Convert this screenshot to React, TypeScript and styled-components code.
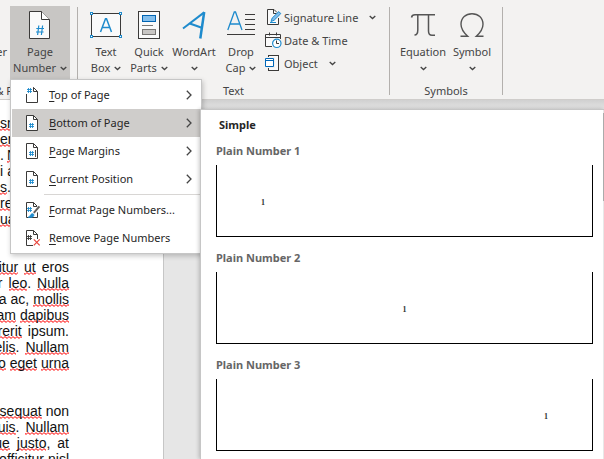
import React from "react";
import styled, { createGlobalStyle } from "styled-components";

const INK = "#3b3a39";
const BLUE = "#1e8bcd";

const Global = createGlobalStyle`
  * { box-sizing: border-box; }
  body {
    margin: 0;
    overflow: hidden;
    background: #e6e6e6;
    font: 11px/16px "Noto Sans", sans-serif;
  }
  button { margin: 0; padding: 0; border: 0; background: none; font: inherit; color: inherit; }
  svg { display: block; flex: none; }
`;

const Page = styled.div`
  position: relative;
  display: flex;
  flex-direction: column;
  height: 100vh;
  overflow: hidden;
  color: #444;
`;

/* ---------- ribbon ---------- */

const Ribbon = styled.header`
  display: flex;
  flex: none;
  padding-top: 6px;
  background: #f3f2f1;
  border-bottom: 1px solid #cfcdcb;
`;

const Group = styled.section`
  flex: none;
`;

const Divider = styled.div`
  width: 1px;
  flex: none;
  margin: 1px 0 4px;
  background: #b3b0ad;
`;

const Tools = styled.div<{ $left?: number; $right?: number }>`
  display: flex;
  align-items: stretch;
  height: 73px;
  padding-left: ${(p) => p.$left ?? 0}px;
  padding-right: ${(p) => p.$right ?? 0}px;
`;

const GroupLabel = styled.div`
  padding: 4px 0 0;
  text-align: center;
  white-space: nowrap;
`;

const CutLabel = styled(GroupLabel)`
  display: flex;
  justify-content: flex-end;
  width: 17px;
  padding-right: 5px;
`;

const CutText = styled.span`
  display: flex;
  justify-content: flex-end;
  flex: none;
  width: 10px;
  padding: 38px 3px 0 0;
`;

const BigButton = styled.button<{ $width: number; $active?: boolean }>`
  display: flex;
  flex-direction: column;
  align-items: center;
  flex: none;
  width: ${(p) => p.$width}px;
  padding-top: 5px;
  background: ${(p) => (p.$active ? "#c8c6c4" : "transparent")};
  white-space: nowrap;
`;

const FirstLine = styled.span`
  margin-top: 5px;
`;

const SecondLine = styled.span`
  display: flex;
  align-items: center;
  gap: 4px;
  height: 16px;
`;

const SmallColumn = styled.div`
  display: flex;
  flex-direction: column;
  align-items: flex-start;
  width: 125px;
  padding-left: 1px;
`;

const SmallButton = styled.button`
  display: flex;
  align-items: center;
  gap: 2px;
  height: 23px;
  white-space: nowrap;
`;

const Arrow = styled.span`
  margin-left: 9px;
`;

/* ---------- document ---------- */

const Workspace = styled.main`
  flex: 1;
  min-height: 0;
  display: flex;
  background: linear-gradient(#d0d0d0, #e6e6e6 10px);
`;

const Sheet = styled.article`
  width: 164px;
  flex: none;
  padding-top: 15px;
  overflow: hidden;
  background: #fff;
  border-right: 1px solid #c6c6c6;
  color: #111;
  font: 14px/16px "Liberation Sans", Arial, sans-serif;
`;

const Paragraph = styled.p`
  margin: 0 0 32px;
  width: 69px;
`;

const TextLine = styled.span<{ $gap: number; $start?: boolean }>`
  display: flex;
  justify-content: ${(p) => (p.$start ? "flex-start" : "flex-end")};
  gap: ${(p) => p.$gap}px;
  height: 16px;
  white-space: nowrap;
`;

const Misspelt = styled.span`
  display: inline-block;
  height: 16px;
  background: url("data:image/svg+xml,%3Csvg xmlns='http://www.w3.org/2000/svg' width='4' height='3'%3E%3Cpath d='M-1 .2 1 2.5 3 .5 5 2.7' fill='none' stroke='%23f00'/%3E%3C/svg%3E")
    repeat-x left bottom;
`;

/* ---------- menu and gallery ---------- */

const Flyouts = styled.div`
  position: absolute;
  top: 79px;
  left: 10px;
  right: 0;
  bottom: 0;
  display: flex;
  align-items: flex-start;
`;

const Menu = styled.div`
  display: flex;
  flex-direction: column;
  flex: none;
  width: 192px;
  padding: 1px;
  background: #fff;
  border: 1px solid #c6c6c6;
  box-shadow: 1px 2px 5px rgba(0, 0, 0, 0.22);
  color: #262626;
`;

const MenuItem = styled.button<{ $active?: boolean }>`
  display: flex;
  align-items: center;
  height: 28px;
  padding: 0 8px 0 14px;
  background: ${(p) => (p.$active ? "#cfcdcb" : "transparent")};
  text-align: left;
  white-space: nowrap;
`;

const MenuText = styled.span`
  flex: 1;
  margin-left: 7px;
  u { text-underline-offset: 2px; }
`;

const Separator = styled.hr`
  height: 1px;
  margin: 1px 0 1px 32px;
  border: 0;
  background: #d8d6d4;
`;

const Gallery = styled.section`
  display: flex;
  flex: 1;
  align-self: stretch;
  margin: 30px 0 0 -2px;
  overflow: hidden;
  background: #fff;
  border: solid #c6c6c6;
  border-width: 1px 0 0 1px;
  box-shadow: -1px 0 4px rgba(0, 0, 0, 0.22);
`;

const GalleryList = styled.div`
  flex: 1;
  padding: 7px 10px 0 15px;
`;

const Heading = styled.h2`
  margin: 0 0 10px;
  padding-left: 3px;
  font-size: 11px;
  font-weight: 700;
  color: #262626;
`;

const Entry = styled.button`
  display: block;
  width: 100%;
  margin-bottom: 13px;
  text-align: left;
  font-weight: 700;
  color: #666;
`;

const Preview = styled.span<{ $align: string }>`
  display: block;
  height: 72px;
  margin-top: 6px;
  padding: 30px 44px 0;
  border: solid #000;
  border-width: 0 1px 1px;
  text-align: ${(p) => p.$align};
  font: bold 8px/16px "Liberation Serif", serif;
  color: #333;
`;

const Track = styled.div`
  width: 1px;
  background: #e8e8e8;
`;

const Thumb = styled.div`
  height: 88px;
  margin-top: 3px;
  background: #ababab;
`;

/* ---------- icons ---------- */

const Chevron = () => (
  <svg width="7" height="5" viewBox="0 0 7 5" fill="none" stroke="#444" strokeWidth="1.3">
    <path d="M.7.9 3.5 3.5 6.3.9" />
  </svg>
);

const SubmenuArrow = () => (
  <svg width="6" height="10" viewBox="0 0 6 10" fill="none" stroke="#444" strokeWidth="1.3">
    <path d="M.8.7 5 5 .8 9.3" />
  </svg>
);

const PageNumberIcon = () => (
  <svg width="22" height="28" viewBox="0 0 22 28" fill="none" stroke={INK}>
    <path d="M.5.5H12.5L20.5 8.5V27.5H.5Z" fill="#fafafa" />
    <path d="M12.5.5V8.5H20.5" fill="#fff" />
    <path d="M9.8 14.5 8.6 24M13.6 14.5 12.4 24M7.3 17.5H15M7 21H14.6" stroke={BLUE} strokeWidth="1.2" />
  </svg>
);

const TextBoxIcon = () => (
  <svg width="32" height="28" viewBox="0 0 32 28" fill="none">
    <rect x="1.5" y="2.5" width="29" height="23" fill="#fafafa" stroke={INK} />
    <g fill="#fff" stroke={BLUE}>
      <rect x=".5" y="1.5" width="2" height="2" />
      <rect x="29.5" y="1.5" width="2" height="2" />
      <rect x=".5" y="24.5" width="2" height="2" />
      <rect x="29.5" y="24.5" width="2" height="2" />
    </g>
    <path d="M10.5 21 15.5 7.8H16.5L21.5 21M12.4 16.5H19.6" stroke={BLUE} strokeWidth="1.5" />
  </svg>
);

const QuickPartsIcon = () => (
  <svg width="22" height="28" viewBox="0 0 22 28">
    <rect x=".5" y=".5" width="21" height="27" fill="#fafafa" stroke={INK} />
    <rect x="4.5" y="4.5" width="13" height="6" fill="#83beec" stroke="#0063b1" />
    <path d="M4 14.5H15" stroke="#797775" />
    <rect x="4.5" y="18.5" width="13" height="5" fill="#c8c6c4" stroke="#797775" />
  </svg>
);

const WordArtIcon = () => (
  <svg width="24" height="28" viewBox="0 0 24 28" fill="none" stroke={BLUE}>
    <path d="M1 17.5 22.2 1.4" strokeWidth="2" />
    <path d="M22.2 1 18.3 27.5" strokeWidth="2.5" />
    <path d="M7.8 12.5 19.8 16.8" strokeWidth="2" />
  </svg>
);

const DropCapIcon = () => (
  <svg width="28" height="28" viewBox="0 0 28 28" fill="none">
    <path d="M.8 19 7.3 1H8.5L15 19M3 13H12.8" stroke={BLUE} strokeWidth="1.3" />
    <path d="M18 3.5H28M18 8.5H28M18 13.5H28M18 18.5H28M0 23.5H28" stroke={INK} />
  </svg>
);

const SignatureIcon = () => (
  <svg width="17" height="17" viewBox="0 0 17 17" fill="none" stroke={INK}>
    <path d="M13.5 9V15.5H2.5V.5H9L12 3.5" fill="#fafafa" />
    <path d="M8.5.5V4.5H11.5" />
    <path d="M5 13.5H11" stroke={BLUE} />
    <path d="M6 12.5 7.2 9 13.8 2.6 15.8 4.6 9.2 11.2Z" fill="#83beec" stroke={BLUE} />
  </svg>
);

const DateIcon = () => (
  <svg width="17" height="17" viewBox="0 0 17 17" fill="none" stroke={INK}>
    <path d="M7 14.5H.5V2.5H15.5V7" fill="#fafafa" />
    <path d="M.5 5.5H15.5M4.5.5V3.5M11.5.5V3.5" />
    <circle cx="11.8" cy="11.3" r="4.2" fill="#fff" stroke={BLUE} strokeWidth="1.2" />
    <path d="M11.5 8.5V11.5H14" />
  </svg>
);

const ObjectIcon = () => (
  <svg width="17" height="17" viewBox="0 0 17 17" fill="none">
    <rect x="3.5" y=".5" width="10" height="15" fill="#fafafa" stroke={INK} />
    <rect x="2" y="2" width="8" height="11" fill="#f3f2f1" />
    <path d="M.5 3.5H8.5V11.5H.5ZM.5 5.5H8.5" fill="#fff" stroke="#0067b8" />
  </svg>
);

const PiIcon = () => (
  <svg width="26" height="28" viewBox="0 0 26 28" fill="none" stroke="#555" strokeWidth="1.5">
    <path d="M1.5 6.5Q2 3.8 5 3.8H25M7.8 4V19Q7.8 24 4.5 24M18.5 4V20Q18.5 24.3 22 24.3H25" />
  </svg>
);

const OmegaIcon = () => (
  <svg width="26" height="28" viewBox="0 0 26 28" fill="none" stroke="#555" strokeWidth="1.4">
    <path d="M1.5 25.3H8.7C4.5 21.5 2 18.5 2 13.3 2 6.5 6.8 2.7 13 2.7S24 6.5 24 13.3C24 18.5 21.5 21.5 17.3 25.3H24.5" />
  </svg>
);

type HashSpot = "top" | "bottom" | "margin" | "format" | "remove";

const HASH: Record<HashSpot, { x: number; y: number; color: string }> = {
  top: { x: 1, y: 1, color: BLUE },
  bottom: { x: 3, y: 8, color: BLUE },
  margin: { x: 3, y: 8, color: BLUE },
  format: { x: 1, y: 5, color: BLUE },
  remove: { x: 1, y: 5, color: INK },
};

function DocIcon({ spot }: { spot: HashSpot }) {
  const { x, y, color } = HASH[spot];
  return (
    <svg width="16" height="16" viewBox="0 0 16 16" fill="none" stroke={INK}>
      {spot === "top" ? (
        <path d="M7 .5H7.5L11.5 4.5V15.5H.5V7" fill="#fff" />
      ) : (
        <path d="M.5.5H7.5L11.5 4.5V15.5H.5Z" fill="#fff" />
      )}
      <path d="M7.5.5V4.5H11.5" />
      <path
        d={`M${x + 1.5} ${y}V${y + 5}M${x + 3.5} ${y}V${y + 5}M${x} ${y + 1.5}H${x + 5}M${x} ${y + 3.5}H${x + 5}`}
        stroke={color}
        strokeWidth=".9"
      />
      {spot === "margin" && <path d="M9.5 7V14" strokeWidth=".9" />}
      {spot === "format" && (
        <>
          <path d="M7.5 12 13.5 4.8" stroke="#fff" strokeWidth="4" />
          <path d="M7.8 10.8 13.4 4.4" stroke="#605e5c" strokeWidth="2" />
          <path d="M2 15.3Q4 14.5 4.6 12.8 5.8 10.8 7.8 12.2 8.6 14 6.8 15 4.8 16 2 15.3Z" fill={BLUE} stroke={BLUE} strokeWidth=".6" />
        </>
      )}
      {spot === "remove" && (
        <>
          <path d="M7 9H16V16H7Z" fill="#fff" stroke="none" />
          <path d="M7.8 9.3 13.7 15.3M13.7 9.3 7.8 15.3" stroke="#e8453c" strokeWidth="1.2" />
        </>
      )}
    </svg>
  );
}

/* ---------- parts ---------- */

interface BigProps {
  icon: React.ReactNode;
  first: string;
  second?: string;
  width: number;
  active?: boolean;
}

function Big({ icon, first, second, width, active }: BigProps) {
  return (
    <BigButton type="button" $width={width} $active={active}>
      {icon}
      <FirstLine>{first}</FirstLine>
      <SecondLine>
        {second}
        <Chevron />
      </SecondLine>
    </BigButton>
  );
}

interface SmallProps {
  icon: React.ReactNode;
  label: string;
  arrow?: boolean;
}

function Small({ icon, label, arrow }: SmallProps) {
  return (
    <SmallButton type="button">
      {icon}
      {label}
      {arrow && (
        <Arrow>
          <Chevron />
        </Arrow>
      )}
    </SmallButton>
  );
}

interface ItemProps {
  spot: HashSpot;
  label: string;
  submenu?: boolean;
  active?: boolean;
}

function Item({ spot, label, submenu, active }: ItemProps) {
  return (
    <MenuItem type="button" role="menuitem" $active={active}>
      <DocIcon spot={spot} />
      <MenuText>
        <u>{label[0]}</u>
        {label.slice(1)}
      </MenuText>
      {submenu && <SubmenuArrow />}
    </MenuItem>
  );
}

interface LineData {
  words: string[];
  gap: number;
}

/* A part between underscores is marked as misspelt. */
const PARAGRAPHS: { start?: boolean; lines: LineData[] }[] = [
  {
    start: true,
    lines: [
      { words: ["_sn_"], gap: 4 },
      { words: ["_en_"], gap: 4 },
      { words: [".", "_N_"], gap: 3 },
      { words: ["i", "a"], gap: 4 },
      { words: ["_s_."], gap: 4 },
      { words: ["_re_"], gap: 4 },
      { words: ["_ua_"], gap: 4 },
    ],
  },
  {
    lines: [
      { words: ["_itur_", "_ut_", "eros"], gap: 6 },
      { words: ["r", "_leo_.", "_Nulla_"], gap: 6 },
      { words: ["a", "ac,", "_mollis_"], gap: 4 },
      { words: ["_am_", "_dapibus_"], gap: 4 },
      { words: ["_rerit_", "ipsum."], gap: 6 },
      { words: ["_elis_.", "_Nullam_"], gap: 6 },
      { words: ["_o_", "_eget_", "_urna_"], gap: 4 },
    ],
  },
  {
    lines: [
      { words: ["_sequat_", "non"], gap: 4 },
      { words: ["_uis_.", "_Nullam_"], gap: 6 },
      { words: ["_ue_", "_justo_,", "at"], gap: 7 },
      { words: ["_officitur_", "_nisl_"], gap: 4 },
    ],
  },
];

function Word({ text }: { text: string }) {
  const [, marked, rest] = text.split("_");
  return marked === undefined ? (
    <span>{text}</span>
  ) : (
    <span>
      <Misspelt>{marked}</Misspelt>
      {rest}
    </span>
  );
}

const PREVIEWS = [
  { name: "Plain Number 1", align: "left" },
  { name: "Plain Number 2", align: "center" },
  { name: "Plain Number 3", align: "right" },
];

export default function App() {
  return (
    <>
      <Global />
      <Page>
        <Ribbon>
          <Group>
            <Tools $right={7}>
              <CutText>er</CutText>
              <Big width={60} active icon={<PageNumberIcon />} first="Page" second="Number" />
            </Tools>
            <CutLabel>&amp; F</CutLabel>
          </Group>
          <Divider />
          <Group>
            <Tools $left={6}>
              <Big width={44} icon={<TextBoxIcon />} first="Text" second="Box" />
              <Big width={42} icon={<QuickPartsIcon />} first="Quick" second="Parts" />
              <Big width={48} icon={<WordArtIcon />} first="WordArt" />
              <Big width={46} icon={<DropCapIcon />} first="Drop" second="Cap" />
              <SmallColumn>
                <Small icon={<SignatureIcon />} label="Signature Line" arrow />
                <Small icon={<DateIcon />} label="Date & Time" />
                <Small icon={<ObjectIcon />} label="Object" arrow />
              </SmallColumn>
            </Tools>
            <GroupLabel>Text</GroupLabel>
          </Group>
          <Divider />
          <Group>
            <Tools $left={8} $right={6}>
              <Big width={50} icon={<PiIcon />} first="Equation" />
              <Big width={48} icon={<OmegaIcon />} first="Symbol" />
            </Tools>
            <GroupLabel>Symbols</GroupLabel>
          </Group>
          <Divider />
        </Ribbon>
        <Workspace>
          <Sheet>
            {PARAGRAPHS.map((paragraph, p) => (
              <Paragraph key={p}>
                {paragraph.lines.map((line, l) => (
                  <TextLine key={l} $gap={line.gap} $start={paragraph.start}>
                    {line.words.map((word, w) => (
                      <Word key={w} text={word} />
                    ))}
                  </TextLine>
                ))}
              </Paragraph>
            ))}
          </Sheet>
        </Workspace>
        <Flyouts>
          <Menu role="menu">
            <Item spot="top" label="Top of Page" submenu />
            <Item spot="bottom" label="Bottom of Page" submenu active />
            <Item spot="margin" label="Page Margins" submenu />
            <Item spot="bottom" label="Current Position" submenu />
            <Separator />
            <Item spot="format" label="Format Page Numbers..." />
            <Item spot="remove" label="Remove Page Numbers" />
          </Menu>
          <Gallery>
            <GalleryList>
              <Heading>Simple</Heading>
              {PREVIEWS.map((preview) => (
                <Entry key={preview.name} type="button">
                  {preview.name}
                  <Preview $align={preview.align}>1</Preview>
                </Entry>
              ))}
            </GalleryList>
            <Track>
              <Thumb />
            </Track>
          </Gallery>
        </Flyouts>
      </Page>
    </>
  );
}
